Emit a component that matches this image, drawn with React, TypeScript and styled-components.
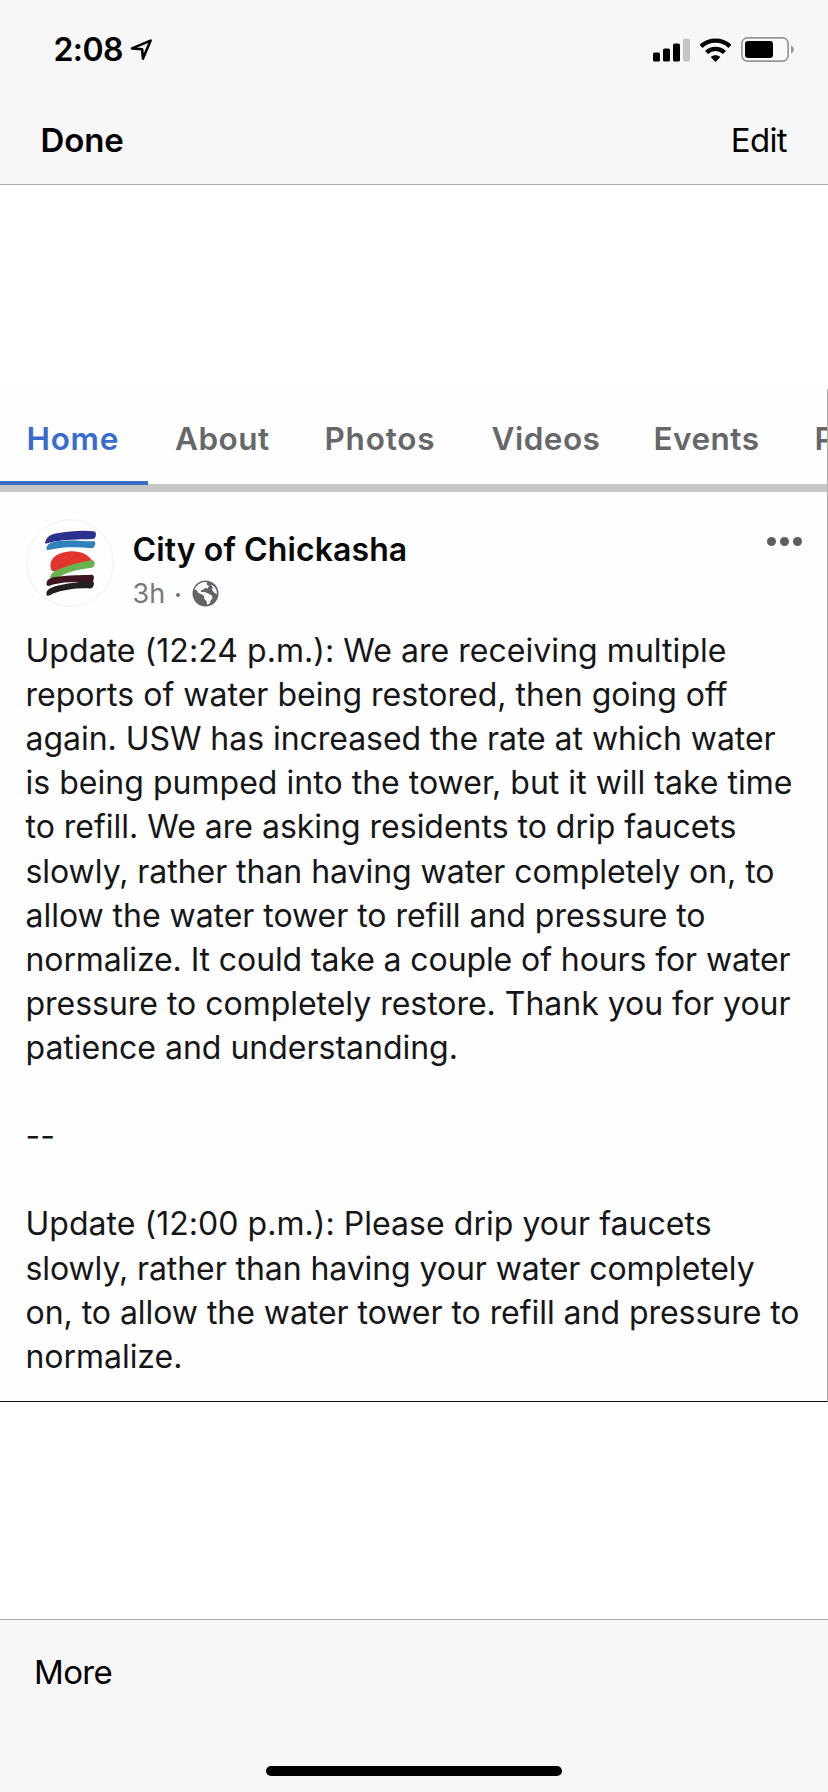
import React from "react";
import styled, { createGlobalStyle } from "styled-components";

const GlobalStyle = createGlobalStyle`
  * { box-sizing: border-box; }
  body { margin: 0; background: #fff; }
`;

const Screen = styled.div`
  display: flex;
  flex-direction: column;
  width: 828px;
  height: 1792px;
  background: #fff;
  color: #000;
  font-family: Inter, "Liberation Sans", sans-serif;
  overflow: hidden;
`;

const Header = styled.header`
  flex: none;
  height: 185px;
  background: #f7f7f7;
  border-bottom: 1px solid #acacac;
`;

const StatusBar = styled.div`
  display: flex;
  align-items: center;
  height: 99px;
  padding: 0 34px 0 53.5px;
`;

const Time = styled.span`
  font-size: 32px;
  font-weight: 600;
  letter-spacing: -0.6px;
  margin-right: 7.5px;
`;

const StatusIcons = styled.div`
  display: flex;
  align-items: center;
  gap: 10px;
  margin-left: auto;
`;

const NavBar = styled.nav`
  display: flex;
  align-items: center;
  justify-content: space-between;
  height: 82px;
  padding: 0 41px 0 40.5px;
`;

const BarButton = styled.button<{ $strong?: boolean }>`
  padding: 0;
  border: 0;
  background: none;
  color: #000;
  font: ${(p) => (p.$strong ? 600 : 400)} 33px/40px Inter, sans-serif;
  letter-spacing: ${(p) => (p.$strong ? "-0.1px" : "-0.65px")};
`;

const Viewer = styled.main`
  flex: 1;
  padding-top: 204px;
`;

const Photo = styled.article`
  height: 1013px;
  background: #fefefe;
  border-right: 1px solid #adadad;
  border-bottom: 1px solid #111;
  overflow: hidden;
`;

const Tabs = styled.div`
  display: grid;
  grid-template-columns: 148.5px 149.5px 167px 162px 161px 40px;
  height: 103px;
  padding-left: 26.5px;
  border-bottom: 8px solid #c6c6c6;
  margin-right: -20px;
`;

const Tab = styled.span<{ $active?: boolean; $track: number }>`
  position: relative;
  color: ${(p) => (p.$active ? "#386bcd" : "#666769")};
  font-size: 31.5px;
  font-weight: 570;
  line-height: 99px;
  letter-spacing: ${(p) => p.$track}px;

  &::after {
    content: "";
    display: ${(p) => (p.$active ? "block" : "none")};
    position: absolute;
    left: -26.5px;
    top: 91.5px;
    width: 147.5px;
    height: 4.5px;
    background: #3b6cc8;
  }
`;

const PostHeader = styled.div`
  display: flex;
  height: 137px;
  padding: 27px 25px 0 26px;
`;

const Author = styled.div`
  flex: 1;
  padding: 9px 0 0 18.5px;
`;

const Name = styled.div`
  font-size: 32px;
  font-weight: 600;
  line-height: 44px;
  letter-spacing: 0.1px;
  color: #080808;
`;

const Meta = styled.div`
  display: flex;
  align-items: center;
  font-size: 27px;
  line-height: 43px;
  color: #77797c;
`;

const Dot = styled.i`
  width: 4px;
  height: 4px;
  margin: 3px 11.5px 0 11px;
  border-radius: 50%;
  background: #707275;
`;

const MoreDots = styled.div`
  display: flex;
  gap: 4.2px;
  height: 9px;
  margin-top: 18px;
`;

const MoreDot = styled.i`
  width: 9px;
  height: 9px;
  border-radius: 50%;
  background: #5c5e61;
`;

const Body = styled.div`
  padding-left: 25.5px;
  font-size: 32px;
  line-height: 44.12px;
  color: #161618;
`;

const Line = styled.div<{ $track: number }>`
  height: 44.12px;
  white-space: nowrap;
  letter-spacing: ${(p) => p.$track - 0.02}px;
`;

const Footer = styled.footer`
  display: flex;
  flex-direction: column;
  align-items: flex-start;
  justify-content: space-between;
  flex: none;
  height: 173px;
  padding: 32px 34px 16px;
  background: #f7f7f7;
  border-top: 1px solid #acacac;
`;

const HomeIndicator = styled.div`
  align-self: center;
  width: 296px;
  height: 10px;
  border-radius: 5px;
  background: #000;
`;

const LocationIcon = () => (
  <svg width="24" height="24" viewBox="0 0 24 24">
    <path d="M2 10.4 20.6 2.6 13 20.6 12.1 11.2Z" fill="none" stroke="#000" strokeWidth="2.6" strokeLinejoin="round" />
  </svg>
);

const SignalIcon = () => (
  <svg width="37" height="24" viewBox="0 0 37 24">
    <rect x="0" y="14.5" width="7" height="9" rx="1.6" />
    <rect x="10" y="10.5" width="7" height="13" rx="1.6" />
    <rect x="20" y="5.5" width="7" height="18" rx="1.6" />
    <rect x="30" y="0.5" width="7" height="23" rx="1.6" fill="#c5c5c5" />
  </svg>
);

const WifiIcon = () => (
  <svg width="31" height="24" viewBox="0.5 0 31 24">
    <g fill="none" stroke="#000" strokeWidth="4.4">
      <path d="M1.6 8.3C9.7.7 22.3.7 30.4 8.3" />
      <path d="M7.1 14.5C12.1 9.7 19.9 9.7 24.9 14.5" />
    </g>
    <path d="M11.2 19.1C13.9 16.6 18.1 16.6 20.8 19.1L16 24Z" />
  </svg>
);

const BatteryIcon = () => (
  <svg width="53" height="25" viewBox="0 0 53 25">
    <rect x="0.9" y="0.9" width="46.2" height="23.2" rx="5.5" fill="#fafafa" stroke="#969696" strokeWidth="1.7" />
    <rect x="4" y="4" width="28" height="17" rx="3" />
    <path d="M50 8.5C53.8 10 53.8 15 50 16.5Z" fill="#969696" />
  </svg>
);

const GlobeIcon = () => (
  <svg width="27" height="27" viewBox="0 0 27 27">
    <circle cx="13.5" cy="13.5" r="13" fill="#626468" />
    <path
      d="M2.3 9.4C4.4 5.5 7.4 2.9 11.8 2L15.3 2.6 14.6 4.6 17 6 15.5 8.4 13 8.1 11.2 9.8 9.2 10 8.8 12 12.6 12 15.7 13.3 19.8 15.6 20.6 18 18.8 20.5 17.6 23.6 15.1 24.7 14.6 21.2 12 18.5 12.3 16 9.4 14.3 6.5 13 4.2 9.8Z"
      fill="#fbfbfb"
    />
    <path d="M18.6 4.4 22 6.2 24.4 9.8 25 14.2 22.2 12.8 20 10 20.8 7.4Z" fill="#fbfbfb" />
  </svg>
);

const CityLogo = () => (
  <svg width="88" height="88" viewBox="0 0 88 88">
    <circle cx="44" cy="44" r="43.3" fill="#fefefe" stroke="#f4f4f4" strokeWidth="1.4" />
    <path d="M19 24C20 18 24 15.5 31 14.2 43 12 57 11 68 12.2 71 12.6 70.5 19.5 67 20 53 20.4 39 20.5 28 22.6 23 23.7 19.5 25.5 19 24Z" fill="#2c318d" />
    <path d="M20.5 29C21 25 25 23.2 32 22 45 20.5 57 22.4 68 22.2 70.5 22.5 69 28.4 66.5 29.2 52 28 38 27.5 25 30.6 22 31.3 20 31.5 20.5 29Z" fill="#2f80bd" />
    <path d="M25 50C22.4 40.5 30 33.5 43 32.4 54 31.5 63 35.5 66.5 42.4 54 43.7 45 46.2 36 50.6 31 53 26 53.5 25 50Z" fill="#e3352b" />
    <path d="M24 60C24 54 29 51.5 36 49 47 44.5 57 42.7 66.5 41.2 70 41.6 69 48 66 48.7 54 50 44 52 34 57.4Z" fill="#68b34f" />
    <path d="M20.5 65C20.5 60.5 24 58.5 31 57.8 44 56.3 54 56.2 66 55.8 69 56.5 68.4 62.5 65 63.5 51 62.5 38 62.6 27 65.6 23 67 20.6 68 20.5 65Z" fill="#401320" />
    <path d="M20.4 75C20.4 71 24 68.6 32 66.5 44 63.6 55 62.8 66.5 61.8 69 63 68 68.5 65 69.6 52 68.5 38 70.5 27 74.6 23 77 20.5 78 20.4 75Z" fill="#202022" />
  </svg>
);

const tabs: [string, number][] = [
  ["Home", 0.7],
  ["About", 0.5],
  ["Photos", 0.8],
  ["Videos", 0.5],
  ["Events", 0.5],
  ["Posts", 0.5],
];

const lines: [string, number][] = [
  ["Update (12:24 p.m.): We are receiving multiple", 0.063],
  ["reports of water being restored, then going off", 0.038],
  ["again. USW has increased the rate at which water", -0.021],
  ["is being pumped into the tower, but it will take time", 0.047],
  ["to refill. We are asking residents to drip faucets", 0.014],
  ["slowly, rather than having water completely on, to", -0.022],
  ["allow the water tower to refill and pressure to", -0.011],
  ["normalize. It could take a couple of hours for water", -0.079],
  ["pressure to completely restore. Thank you for your", -0.002],
  ["patience and understanding.", 0.011],
  ["", 0],
  ["--", 0],
  ["", 0],
  ["Update (12:00 p.m.): Please drip your faucets", 0.058],
  ["slowly, rather than having your water completely", -0.06],
  ["on, to allow the water tower to refill and pressure to", -0.02],
  ["normalize.", -0.02],
];

export default function App() {
  return (
    <Screen>
      <GlobalStyle />
      <Header>
        <StatusBar>
          <Time>2:08</Time>
          <LocationIcon />
          <StatusIcons>
            <SignalIcon />
            <WifiIcon />
            <BatteryIcon />
          </StatusIcons>
        </StatusBar>
        <NavBar>
          <BarButton $strong>Done</BarButton>
          <BarButton>Edit</BarButton>
        </NavBar>
      </Header>
      <Viewer>
        <Photo>
          <Tabs>
            {tabs.map(([label, track], i) => (
              <Tab key={label} $active={i === 0} $track={track}>
                {label}
              </Tab>
            ))}
          </Tabs>
          <PostHeader>
            <CityLogo />
            <Author>
              <Name>City of Chickasha</Name>
              <Meta>
                3h
                <Dot />
                <GlobeIcon />
              </Meta>
            </Author>
            <MoreDots>
              <MoreDot />
              <MoreDot />
              <MoreDot />
            </MoreDots>
          </PostHeader>
          <Body>
            {lines.map(([text, track], i) => (
              <Line key={i} $track={track}>
                {text}
              </Line>
            ))}
          </Body>
        </Photo>
      </Viewer>
      <Footer>
        <BarButton>More</BarButton>
        <HomeIndicator />
      </Footer>
    </Screen>
  );
}
